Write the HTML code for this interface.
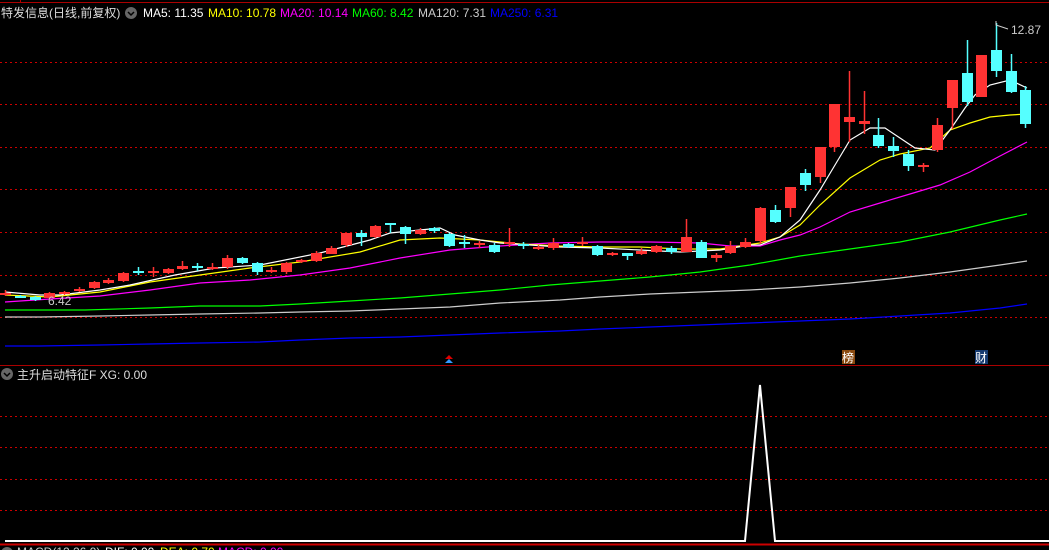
<!DOCTYPE html>
<html><head><meta charset="utf-8"><style>
html,body{margin:0;padding:0;background:#000;width:1049px;height:550px;overflow:hidden}
svg{display:block}
text{font-family:"Liberation Sans","Noto Sans CJK SC",sans-serif;font-size:12px}
</style></head><body>
<svg width="1049" height="550" xmlns="http://www.w3.org/2000/svg">
<rect width="1049" height="550" fill="#000"/>
<line x1="0" y1="2.5" x2="1049" y2="2.5" stroke="#a00"/>
<line x1="20.5" y1="0" x2="20.5" y2="3" stroke="#a00"/>
<g stroke="#c00" stroke-dasharray="2,3">
<line x1="0" y1="62.5" x2="1049" y2="62.5"/><line x1="0" y1="104.5" x2="1049" y2="104.5"/>
<line x1="0" y1="147.5" x2="1049" y2="147.5"/><line x1="0" y1="189.5" x2="1049" y2="189.5"/>
<line x1="0" y1="232.5" x2="1049" y2="232.5"/><line x1="0" y1="275.5" x2="1049" y2="275.5"/>
<line x1="0" y1="317.5" x2="1049" y2="317.5"/>
<line x1="0" y1="416.5" x2="1049" y2="416.5"/><line x1="0" y1="447.5" x2="1049" y2="447.5"/>
<line x1="0" y1="479.5" x2="1049" y2="479.5"/><line x1="0" y1="510.5" x2="1049" y2="510.5"/>
</g>
<line x1="0" y1="365.5" x2="1049" y2="365.5" stroke="#a00"/>
<line x1="0" y1="544.5" x2="1049" y2="544.5" stroke="#c00" stroke-width="2"/>
<g fill="none" stroke-width="1.2">
<polyline stroke="#00f" points="5,346 40,346 100,345 150,344 200,343 260,342 300,340 350,338 400,337 450,335 500,333 560,331 600,329 650,327 700,325 750,323 800,321 850,319 900,316 950,313 1000,308 1027,304"/>
<polyline stroke="#ccc" points="5,317 40,317 100,316 150,315 200,314 260,313 300,312 350,311 400,309 450,307 500,303 560,300 600,297 650,294 700,292 750,290 800,287 850,283 900,278 950,272 1000,265 1027,261"/>
<polyline stroke="#0f0" points="5,310 85,310 150,308 200,306 260,306 300,304 350,301 400,298 450,294 500,290 550,285 600,281 650,277 700,272 750,265 800,256 850,249 900,242 950,232 1000,220 1027,214"/>
<polyline stroke="#f0f" points="5,302 50,299 100,296 150,290 200,283 250,280 300,275 350,268 400,258 450,250 500,246 550,243 600,242 650,242 700,243 730,246 760,246 780,240 800,235 820,227 850,212 880,203 910,194 940,185 970,172 1000,156 1027,142"/>
<polyline stroke="#ff0" points="5,295 50,297 100,292 150,282 200,275 250,268 300,262 360,252 400,240 440,238 480,240 520,244 560,246 600,247 640,247 680,249 720,249 760,243 780,237 800,225 820,205 850,178 880,160 900,154 930,148 950,130 970,123 990,117 1010,115 1027,114"/>
<polyline stroke="#fff" points="5,292 40,295 60,295 100,290 130,285 175,275 215,268 260,265 320,253 370,240 390,233 420,230 440,228 455,235 480,240 500,243 530,245 560,247 600,248 640,250 680,252 720,250 750,245 760,245 780,237 800,220 810,205 820,190 835,165 850,140 870,128 885,128 900,138 915,148 935,150 950,130 965,108 975,95 990,85 1010,80 1027,88"/>
</g>
<g stroke="#f33" stroke-width="1.5" fill="#f33">
<line x1="5.5" y1="290" x2="5.5" y2="296"/><rect x="0" y="293" width="11" height="2" stroke="none"/>
<line x1="49.5" y1="292" x2="49.5" y2="299"/><rect x="44" y="293" width="11" height="5" stroke="none"/>
<line x1="64.5" y1="291" x2="64.5" y2="295"/><rect x="59" y="292" width="11" height="2" stroke="none"/>
<line x1="79.5" y1="287" x2="79.5" y2="292"/><rect x="74" y="289" width="11" height="2" stroke="none"/>
<line x1="94.5" y1="281" x2="94.5" y2="289"/><rect x="89" y="282" width="11" height="6" stroke="none"/>
<line x1="108.5" y1="278" x2="108.5" y2="284"/><rect x="103" y="280" width="11" height="3" stroke="none"/>
<line x1="123.5" y1="272" x2="123.5" y2="282"/><rect x="118" y="273" width="11" height="8" stroke="none"/>
<line x1="153.5" y1="267" x2="153.5" y2="277"/><rect x="148" y="271" width="11" height="2" stroke="none"/>
<line x1="168.5" y1="268" x2="168.5" y2="274"/><rect x="163" y="269" width="11" height="4" stroke="none"/>
<line x1="182.5" y1="261" x2="182.5" y2="270"/><rect x="177" y="266" width="11" height="3" stroke="none"/>
<line x1="212.5" y1="263" x2="212.5" y2="270"/><rect x="207" y="267" width="11" height="2" stroke="none"/>
<line x1="227.5" y1="255" x2="227.5" y2="269"/><rect x="222" y="258" width="11" height="9" stroke="none"/>
<line x1="271.5" y1="267" x2="271.5" y2="273"/><rect x="266" y="270" width="11" height="2" stroke="none"/>
<line x1="286.5" y1="262" x2="286.5" y2="274"/><rect x="281" y="263" width="11" height="9" stroke="none"/>
<line x1="301.5" y1="259" x2="301.5" y2="263"/><rect x="296" y="260" width="11" height="2" stroke="none"/>
<line x1="316.5" y1="251" x2="316.5" y2="262"/><rect x="311" y="253" width="11" height="8" stroke="none"/>
<line x1="331.5" y1="246" x2="331.5" y2="254"/><rect x="326" y="248" width="11" height="6" stroke="none"/>
<line x1="346.5" y1="233" x2="346.5" y2="247"/><rect x="341" y="233" width="11" height="12" stroke="none"/>
<line x1="375.5" y1="225" x2="375.5" y2="238"/><rect x="370" y="226" width="11" height="11" stroke="none"/>
<line x1="420.5" y1="228" x2="420.5" y2="235"/><rect x="415" y="230" width="11" height="4" stroke="none"/>
<line x1="479.5" y1="241" x2="479.5" y2="248"/><rect x="474" y="243" width="11" height="2" stroke="none"/>
<line x1="509.5" y1="228" x2="509.5" y2="247"/><rect x="504" y="242" width="11" height="2" stroke="none"/>
<line x1="538.5" y1="245" x2="538.5" y2="250"/><rect x="533" y="247" width="11" height="2" stroke="none"/>
<line x1="553.5" y1="238" x2="553.5" y2="250"/><rect x="548" y="243" width="11" height="5" stroke="none"/>
<line x1="582.5" y1="237" x2="582.5" y2="246"/><rect x="577" y="242" width="11" height="2" stroke="none"/>
<line x1="612.5" y1="252" x2="612.5" y2="256"/><rect x="607" y="253" width="11" height="2" stroke="none"/>
<line x1="641.5" y1="248" x2="641.5" y2="255"/><rect x="636" y="251" width="11" height="3" stroke="none"/>
<line x1="656.5" y1="245" x2="656.5" y2="253"/><rect x="651" y="246" width="11" height="6" stroke="none"/>
<line x1="686.5" y1="219" x2="686.5" y2="252"/><rect x="681" y="237" width="11" height="15" stroke="none"/>
<line x1="716.5" y1="253" x2="716.5" y2="262"/><rect x="711" y="255" width="11" height="3" stroke="none"/>
<line x1="730.5" y1="241" x2="730.5" y2="254"/><rect x="725" y="246" width="11" height="7" stroke="none"/>
<line x1="745.5" y1="238" x2="745.5" y2="248"/><rect x="740" y="242" width="11" height="5" stroke="none"/>
<line x1="760.5" y1="207" x2="760.5" y2="244"/><rect x="755" y="208" width="11" height="33" stroke="none"/>
<line x1="790.5" y1="187" x2="790.5" y2="217"/><rect x="785" y="187" width="11" height="21" stroke="none"/>
<line x1="820.5" y1="147" x2="820.5" y2="183"/><rect x="815" y="147" width="11" height="30" stroke="none"/>
<line x1="834.5" y1="104" x2="834.5" y2="152"/><rect x="829" y="104" width="11" height="43" stroke="none"/>
<line x1="849.5" y1="71" x2="849.5" y2="142"/><rect x="844" y="117" width="11" height="5" stroke="none"/>
<line x1="864.5" y1="91" x2="864.5" y2="134"/><rect x="859" y="121" width="11" height="3" stroke="none"/>
<line x1="923.5" y1="163" x2="923.5" y2="172"/><rect x="918" y="165" width="11" height="2" stroke="none"/>
<line x1="937.5" y1="118" x2="937.5" y2="152"/><rect x="932" y="125" width="11" height="25" stroke="none"/>
<line x1="952.5" y1="80" x2="952.5" y2="129"/><rect x="947" y="80" width="11" height="28" stroke="none"/>
<rect x="976" y="55" width="11" height="42" stroke="none"/>
</g>
<g stroke="#5ff" stroke-width="1.5" fill="#5ff">
<line x1="20.5" y1="295" x2="20.5" y2="298"/><rect x="15" y="296" width="11" height="2" stroke="none"/>
<line x1="35.5" y1="296" x2="35.5" y2="301"/><rect x="30" y="297" width="11" height="3" stroke="none"/>
<line x1="138.5" y1="267" x2="138.5" y2="275"/><rect x="133" y="271" width="11" height="2" stroke="none"/>
<line x1="197.5" y1="263" x2="197.5" y2="271"/><rect x="192" y="266" width="11" height="2" stroke="none"/>
<line x1="242.5" y1="257" x2="242.5" y2="264"/><rect x="237" y="258" width="11" height="5" stroke="none"/>
<line x1="257.5" y1="262" x2="257.5" y2="275"/><rect x="252" y="263" width="11" height="9" stroke="none"/>
<line x1="361.5" y1="230" x2="361.5" y2="246"/><rect x="356" y="233" width="11" height="4" stroke="none"/>
<line x1="390.5" y1="223" x2="390.5" y2="233"/><rect x="385" y="223" width="11" height="2" stroke="none"/>
<line x1="405.5" y1="226" x2="405.5" y2="244"/><rect x="400" y="227" width="11" height="7" stroke="none"/>
<line x1="434.5" y1="227" x2="434.5" y2="233"/><rect x="429" y="228" width="11" height="3" stroke="none"/>
<line x1="449.5" y1="233" x2="449.5" y2="247"/><rect x="444" y="234" width="11" height="12" stroke="none"/>
<line x1="464.5" y1="235" x2="464.5" y2="248"/><rect x="459" y="242" width="11" height="2" stroke="none"/>
<line x1="494.5" y1="243" x2="494.5" y2="253"/><rect x="489" y="245" width="11" height="7" stroke="none"/>
<line x1="523.5" y1="242" x2="523.5" y2="249"/><rect x="518" y="244" width="11" height="2" stroke="none"/>
<line x1="568.5" y1="243" x2="568.5" y2="248"/><rect x="563" y="244" width="11" height="3" stroke="none"/>
<line x1="597.5" y1="245" x2="597.5" y2="256"/><rect x="592" y="246" width="11" height="9" stroke="none"/>
<line x1="627.5" y1="253" x2="627.5" y2="260"/><rect x="622" y="253" width="11" height="3" stroke="none"/>
<line x1="671.5" y1="246" x2="671.5" y2="254"/><rect x="666" y="248" width="11" height="4" stroke="none"/>
<line x1="701.5" y1="240" x2="701.5" y2="258"/><rect x="696" y="242" width="11" height="16" stroke="none"/>
<line x1="775.5" y1="205" x2="775.5" y2="223"/><rect x="770" y="210" width="11" height="12" stroke="none"/>
<line x1="805.5" y1="169" x2="805.5" y2="191"/><rect x="800" y="173" width="11" height="12" stroke="none"/>
<line x1="878.5" y1="118" x2="878.5" y2="148"/><rect x="873" y="135" width="11" height="11" stroke="none"/>
<line x1="893.5" y1="137" x2="893.5" y2="157"/><rect x="888" y="146" width="11" height="5" stroke="none"/>
<line x1="908.5" y1="150" x2="908.5" y2="171"/><rect x="903" y="154" width="11" height="12" stroke="none"/>
<line x1="967.5" y1="40" x2="967.5" y2="106"/><rect x="962" y="73" width="11" height="29" stroke="none"/>
<line x1="996.5" y1="23" x2="996.5" y2="77"/><rect x="991" y="50" width="11" height="21" stroke="none"/>
<line x1="1011.5" y1="54" x2="1011.5" y2="93"/><rect x="1006" y="71" width="11" height="21" stroke="none"/>
<line x1="1025.5" y1="86" x2="1025.5" y2="128"/><rect x="1020" y="90" width="11" height="34" stroke="none"/>
</g>
<text x="48" y="305" fill="#ccc">6.42</text>
<text x="1011" y="34" fill="#ccc">12.87</text>
<polyline points="996,21 996,25 1008,29" fill="none" stroke="#ccc"/>
<rect x="842" y="350" width="13" height="14" fill="#8a4a10"/>
<text x="842" y="362" fill="#fff">榜</text>
<rect x="975" y="350" width="13" height="14" fill="#153a70"/>
<text x="975" y="362" fill="#fff">财</text>
<polygon points="449,355 453,359 445,359" fill="#d00"/>
<polygon points="449,359 453,363 445,363" fill="#39f"/>
<polyline points="5,541 745,541 760,385 775,541 1049,541" fill="none" stroke="#fff" stroke-width="2"/>
<text x="1" y="17" fill="#ddd">特发信息(日线,前复权)</text>
<circle cx="131" cy="13" r="6" fill="#666"/><path d="M128,12 l3,3 l3,-3" stroke="#000" stroke-width="1.5" fill="none"/>
<text x="143" y="17" fill="#fff">MA5: 11.35</text>
<text x="208" y="17" fill="#ff0">MA10: 10.78</text>
<text x="280" y="17" fill="#f0f">MA20: 10.14</text>
<text x="352" y="17" fill="#0f0">MA60: 8.42</text>
<text x="418" y="17" fill="#ccc">MA120: 7.31</text>
<text x="490" y="17" fill="#00f">MA250: 6.31</text>
<circle cx="7" cy="374" r="6" fill="#666"/><path d="M4,373 l3,3 l3,-3" stroke="#000" stroke-width="1.5" fill="none"/>
<text x="17" y="379" fill="#ddd">主升启动特征F  XG: 0.00</text>
<circle cx="7" cy="553" r="6" fill="#666"/>
<text x="17" y="556" fill="#ccc">MACD(12,26,9)</text><text x="105" y="556" fill="#fff">DIF: 0.00</text>
<text x="160" y="556" fill="#ff0">DEA: 0.70</text><text x="218" y="556" fill="#f0f">MACD: 0.00</text>
</svg>
</body></html>
